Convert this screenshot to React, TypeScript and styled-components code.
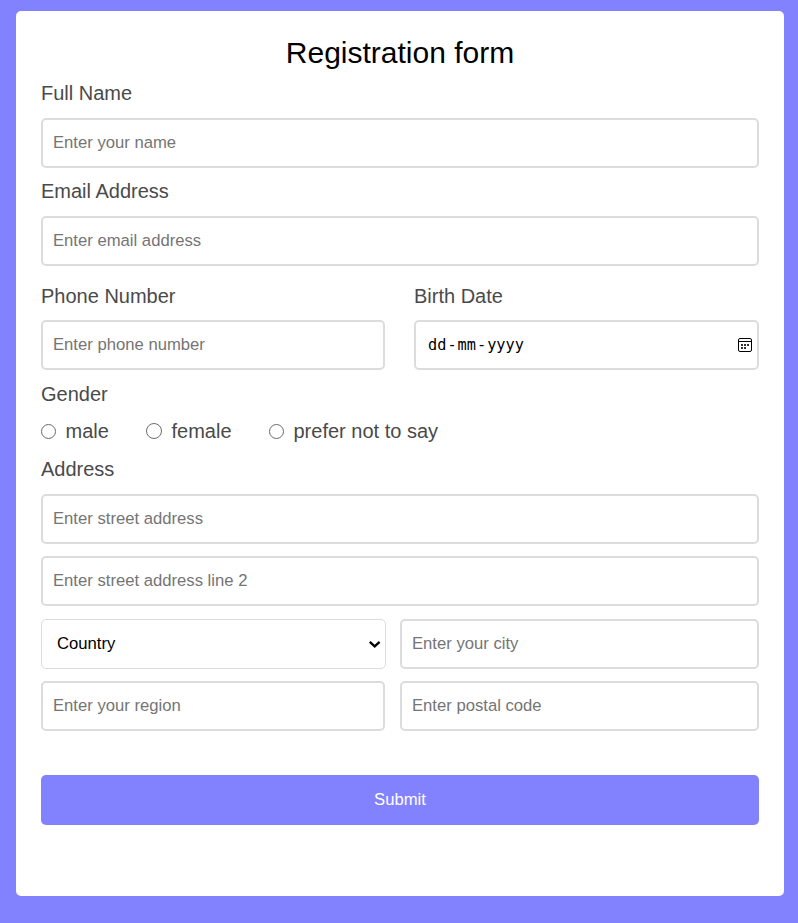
import React from "react";
import styled, { createGlobalStyle } from "styled-components";

const GlobalStyle = createGlobalStyle`
  * { box-sizing: border-box; }
  body {
    margin: 0;
    background: #8282ff;
    font-family: "Liberation Sans", Arial, sans-serif;
  }
`;

const Page = styled.main`
  min-height: 923px;
  padding: 11px 14px 27px 16px;
`;

const Card = styled.form`
  height: 885px;
  padding: 24px 25px 0;
  background: #fff;
  border-radius: 5px;
`;

const Title = styled.h1`
  margin: 0;
  font-size: 30px;
  line-height: 35px;
  font-weight: 400;
  text-align: center;
  color: #000;
`;

const Label = styled.label<{ $top?: number; $bottom?: number }>`
  display: block;
  margin-top: ${(p) => p.$top ?? 11}px;
  margin-bottom: ${(p) => p.$bottom ?? 13}px;
  font-size: 20px;
  line-height: 24px;
  color: #4a4a4a;
`;

const Input = styled.input`
  display: block;
  width: 100%;
  height: 50px;
  margin: 0;
  padding: 0 10px;
  border: 2px solid #dcdcdc;
  border-radius: 5px;
  background: #fff;
  font-family: inherit;
  font-size: 16.67px;
  outline: none;

  &::placeholder {
    color: #757575;
    opacity: 1;
  }
`;

const ContactRow = styled.div`
  display: grid;
  grid-template-columns: 344px 345px;
  column-gap: 29px;
`;

const DateField = styled.div`
  display: flex;
  align-items: center;
  justify-content: space-between;
  height: 50px;
  padding: 0 5px 0 12px;
  border: 2px solid #dcdcdc;
  border-radius: 5px;
`;

const DateText = styled.span`
  display: flex;
  gap: 1px;
  padding-bottom: 1px;
  font-family: "DejaVu Sans Mono", monospace;
  font-size: 15.25px;
  line-height: 20px;
  color: #000;
`;

const GenderRow = styled.div`
  display: grid;
  grid-template-columns: 105px 123px 1fr;
  height: 24px;
`;

const Option = styled.label`
  display: flex;
  align-items: center;
  gap: 9.5px;
  font-size: 20px;
  line-height: 24px;
  color: #4a4a4a;
`;

const Radio = styled.input<{ $size?: number }>`
  appearance: none;
  flex: none;
  width: ${(p) => p.$size ?? 15}px;
  height: ${(p) => p.$size ?? 15}px;
  margin: 0;
  border: 1px solid #6b6b6b;
  border-radius: 50%;
`;

const AddressFields = styled.div`
  display: grid;
  row-gap: 12px;
`;

const SplitRow = styled.div<{ $left: number; $top?: number }>`
  display: grid;
  grid-template-columns: ${(p) => p.$left}px 359px;
  justify-content: space-between;
  margin-top: ${(p) => p.$top ?? 0}px;
`;

const SelectBox = styled.button`
  display: flex;
  align-items: center;
  justify-content: space-between;
  height: 50px;
  padding: 0 4px 1px 15px;
  border: 1px solid #dcdcdc;
  border-radius: 5px;
  background: #fff;
  font-family: inherit;
  font-size: 16.67px;
  color: #000;
`;

const Submit = styled.button`
  display: block;
  width: 100%;
  height: 50px;
  margin-top: 44px;
  padding: 0 0 1px;
  border: 0;
  border-radius: 5px;
  background: #8282ff;
  font-family: inherit;
  font-size: 16.67px;
  color: #fff;
`;

const CalendarIcon = () => (
  <svg width="14" height="14" viewBox="0 0 14 14" fill="none">
    <rect x="0.5" y="0.5" width="13" height="13" rx="1.5" stroke="#000" />
    <path d="M0 3.5h14" stroke="#000" />
    <path d="M3 6h2v2H3zM6 6h2v2H6zM9 6h2v2H9zM3 9h2v2H3zM6 9h2v2H6z" fill="#333" />
  </svg>
);

const Chevron = () => (
  <svg width="13" height="9" viewBox="0 0 13 9" fill="none">
    <path d="M1.8 2.8l4.9 4.6 4.9-4.6" stroke="#000" strokeWidth="2.3" />
  </svg>
);

export default function App() {
  return (
    <>
      <GlobalStyle />
      <Page>
        <Card onSubmit={(e: React.FormEvent) => e.preventDefault()}>
          <Title>Registration form</Title>
          <Label>Full Name</Label>
          <Input placeholder="Enter your name" />
          <Label>Email Address</Label>
          <Input placeholder="Enter email address" />
          <ContactRow>
            <div>
              <Label $top={18} $bottom={12}>Phone Number</Label>
              <Input placeholder="Enter phone number" />
            </div>
            <div>
              <Label $top={18} $bottom={12}>Birth Date</Label>
              <DateField>
                <DateText>
                  <span>dd</span>
                  <span>-</span>
                  <span>mm</span>
                  <span>-</span>
                  <span>yyyy</span>
                </DateText>
                <CalendarIcon />
              </DateField>
            </div>
          </ContactRow>
          <Label as="div" $top={12} $bottom={13}>Gender</Label>
          <GenderRow>
            <Option><Radio type="radio" name="gender" />male</Option>
            <Option><Radio type="radio" name="gender" $size={16} />female</Option>
            <Option><Radio type="radio" name="gender" />prefer not to say</Option>
          </GenderRow>
          <Label as="div" $top={14}>Address</Label>
          <AddressFields>
            <Input placeholder="Enter street address" />
            <Input placeholder="Enter street address line 2" />
            <SplitRow $left={345} $top={1}>
              <SelectBox type="button">
                Country
                <Chevron />
              </SelectBox>
              <Input placeholder="Enter your city" />
            </SplitRow>
            <SplitRow $left={344}>
              <Input placeholder="Enter your region" />
              <Input placeholder="Enter postal code" />
            </SplitRow>
          </AddressFields>
          <Submit type="submit">Submit</Submit>
        </Card>
      </Page>
    </>
  );
}
